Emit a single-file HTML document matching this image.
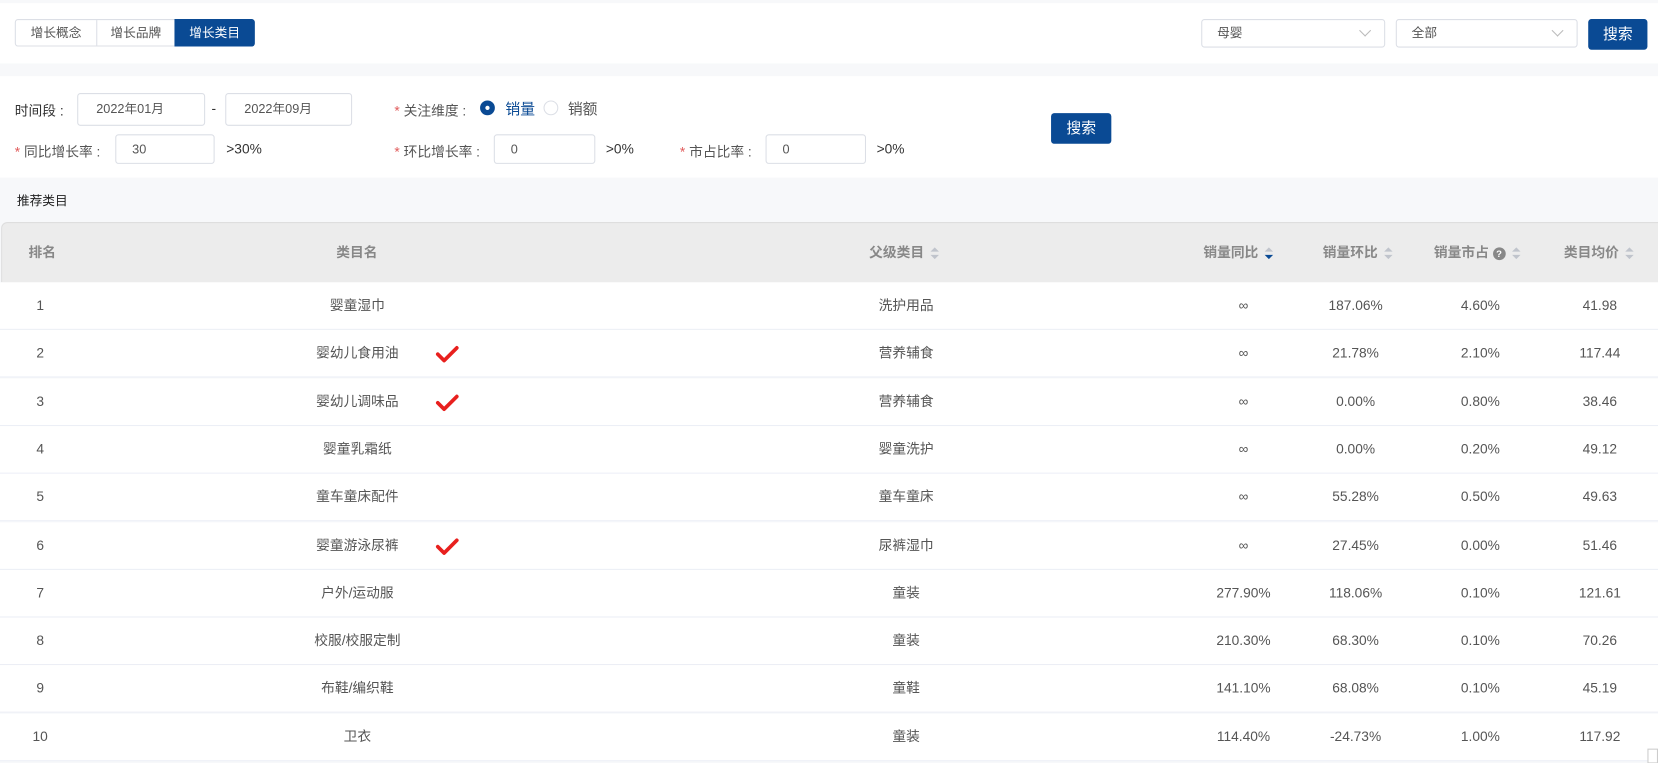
<!DOCTYPE html>
<html><head><meta charset="utf-8"><style>
*{box-sizing:border-box;margin:0;padding:0}
body{width:1658px;height:762px;background:#f7f8fa;font-family:"Liberation Sans","Noto Sans CJK SC",sans-serif;color:#333;position:relative;overflow:hidden;font-size:13px}
#w{position:absolute;left:0;top:0;width:1568px;height:721px;transform:scale(1.05740);transform-origin:0 0}
.a{position:absolute;white-space:nowrap}
.panel{position:absolute;background:#fff}
.inp{position:absolute;border:1px solid #dcdfe6;border-radius:3px;background:#fff;font-size:12px;color:#555;line-height:28px}
.btn{position:absolute;background:#0a4a94;color:#fff;border-radius:3px;text-align:center;font-size:14px}
.star{color:#e05a5a}
.th{position:absolute;top:211px;height:55px;line-height:55px;color:#888;font-weight:bold;font-size:13px;white-space:nowrap}
.row{position:absolute;left:0;width:1568px;height:45px;background:#fff;border-bottom:1px solid #ebeef5}
.c{position:absolute;top:0;line-height:44px;color:#555;font-size:13px;text-align:center;white-space:nowrap}
.sort{display:inline-block;vertical-align:middle;margin-left:6px;width:8px;height:12px;position:relative}
.sort:before{content:"";position:absolute;left:0;top:0;border-left:4px solid transparent;border-right:4px solid transparent;border-bottom:4px solid #c0c4cc}
.sort:after{content:"";position:absolute;left:0;top:7px;border-left:4px solid transparent;border-right:4px solid transparent;border-top:4px solid #c0c4cc}
.sort.d:after{border-top-color:#0a4a94}
</style></head><body><div id="w">
<div class="panel" style="left:0;top:3px;width:1568px;height:57px"></div>
<div class="a" style="left:14px;top:18px;width:227px;height:26px;border:1px solid #dcdfe6;border-radius:3px;background:#fff;font-size:12px;line-height:24px">
<span class="a" style="left:0;width:76px;text-align:center;color:#555">增长概念</span>
<span class="a" style="left:76px;width:74px;text-align:center;color:#555;border-left:1px solid #dcdfe6;height:24px">增长品牌</span>
<span class="a" style="left:150px;top:-1px;width:76px;height:26px;line-height:26px;text-align:center;color:#fff;background:#0a4a94;border-radius:0 3px 3px 0">增长类目</span>
</div>
<div class="inp" style="left:1136px;top:18px;width:174px;height:27px;line-height:25px;padding-left:14px">母婴<span class="a" style="right:14px;top:6px;width:8px;height:8px;border-right:1px solid #bbb;border-bottom:1px solid #bbb;transform:rotate(45deg)"></span></div>
<div class="inp" style="left:1320px;top:18px;width:172px;height:27px;line-height:25px;padding-left:14px">全部<span class="a" style="right:14px;top:6px;width:8px;height:8px;border-right:1px solid #bbb;border-bottom:1px solid #bbb;transform:rotate(45deg)"></span></div>
<div class="btn" style="left:1502px;top:18px;width:56px;height:29px;line-height:29px">搜索</div>

<div class="panel" style="left:0;top:72px;width:1568px;height:96px"></div>
<span class="a" style="left:14px;top:94px">时间段 :</span>
<div class="inp" style="left:73px;top:88px;width:121px;height:31px;padding-left:17px">2022年01月</div>
<span class="a" style="left:200px;top:95px">-</span>
<div class="inp" style="left:213px;top:88px;width:120px;height:31px;padding-left:17px">2022年09月</div>
<span class="a" style="left:373px;top:94px;color:#555"><span class="star">*</span> 关注维度 :</span>
<span class="a" style="left:454px;top:95px;width:14px;height:14px;border-radius:50%;background:#0a4a94"><span class="a" style="left:5px;top:5px;width:4px;height:4px;border-radius:50%;background:#fff"></span></span>
<span class="a" style="left:478px;top:93px;color:#0a4a94;font-size:14px">销量</span>
<span class="a" style="left:514px;top:95px;width:14px;height:14px;border-radius:50%;border:1px solid #dcdfe6"></span>
<span class="a" style="left:537px;top:93px;color:#555;font-size:14px">销额</span>
<span class="a" style="left:14px;top:133px;color:#555"><span class="star">*</span> 同比增长率 :</span>
<div class="inp" style="left:109px;top:127px;width:94px;height:28px;line-height:26px;padding-left:15px">30</div>
<span class="a" style="left:214px;top:133px">&gt;30%</span>
<span class="a" style="left:373px;top:133px;color:#555"><span class="star">*</span> 环比增长率 :</span>
<div class="inp" style="left:467px;top:127px;width:96px;height:28px;line-height:26px;padding-left:15px">0</div>
<span class="a" style="left:573px;top:133px">&gt;0%</span>
<span class="a" style="left:643px;top:133px;color:#555"><span class="star">*</span> 市占比率 :</span>
<div class="inp" style="left:724px;top:127px;width:95px;height:28px;line-height:26px;padding-left:15px">0</div>
<span class="a" style="left:829px;top:133px">&gt;0%</span>
<div class="btn" style="left:994px;top:107px;width:57px;height:29px;line-height:29px">搜索</div>

<span class="a" style="left:16px;top:181px;font-size:12px;color:#222">推荐类目</span>

<div class="a" style="left:1px;top:210px;width:1567px;height:57px;background:#ececec;border-top:1px solid #ddd;border-left:1px solid #ddd;border-radius:6px 0 0 0"></div>
<div class="th" style="left:27px">排名</div>
<div class="th" style="left:318px">类目名</div>
<div class="th" style="left:822px">父级类目<span class="sort"></span></div>
<div class="th" style="left:1138px">销量同比<span class="sort d"></span></div>
<div class="th" style="left:1251px">销量环比<span class="sort"></span></div>
<div class="th" style="left:1356px">销量市占 <span style="display:inline-block;width:12px;height:12px;border-radius:50%;background:#888;color:#fff;font-size:9px;line-height:12px;text-align:center;vertical-align:middle">?</span><span class="sort"></span></div>
<div class="th" style="left:1479px">类目均价<span class="sort"></span></div>

<div id="rows"></div>
<div class="a" style="left:1558px;top:708px;width:10px;height:14px;border:1px solid #ccc;background:#fff"></div>
</div>
<script>
var d=[["1","婴童湿巾",0,"洗护用品","∞","187.06%","4.60%","41.98"],
["2","婴幼儿食用油",1,"营养辅食","∞","21.78%","2.10%","117.44"],
["3","婴幼儿调味品",1,"营养辅食","∞","0.00%","0.80%","38.46"],
["4","婴童乳霜纸",0,"婴童洗护","∞","0.00%","0.20%","49.12"],
["5","童车童床配件",0,"童车童床","∞","55.28%","0.50%","49.63"],
["6","婴童游泳尿裤",1,"尿裤湿巾","∞","27.45%","0.00%","51.46"],
["7","户外/运动服",0,"童装","277.90%","118.06%","0.10%","121.61"],
["8","校服/校服定制",0,"童装","210.30%","68.30%","0.10%","70.26"],
["9","布鞋/编织鞋",0,"童鞋","141.10%","68.08%","0.10%","45.19"],
["10","卫衣",0,"童装","114.40%","-24.73%","1.00%","117.92"]];
var cx=[38,338,857,1176,1282,1400,1513],h="";
d.forEach(function(r,i){
var t=Math.round(267+i*45.3);
h+='<div class="row" style="top:'+t+'px">';
var v=[r[0],r[1],r[3],r[4],r[5],r[6],r[7]];
v.forEach(function(x,j){h+='<div class="c" style="left:'+(cx[j]-100)+'px;width:200px">'+x+'</div>';});
if(r[2])h+='<svg class="a" style="left:412px;top:14px" width="22" height="18" viewBox="0 0 22 18"><path d="M2 9 L8 15 L20 3" fill="none" stroke="#e8201e" stroke-width="3.5" stroke-linecap="round" stroke-linejoin="round"/></svg>';
h+='</div>';});
document.getElementById("rows").innerHTML=h;
</script>
</body></html>
